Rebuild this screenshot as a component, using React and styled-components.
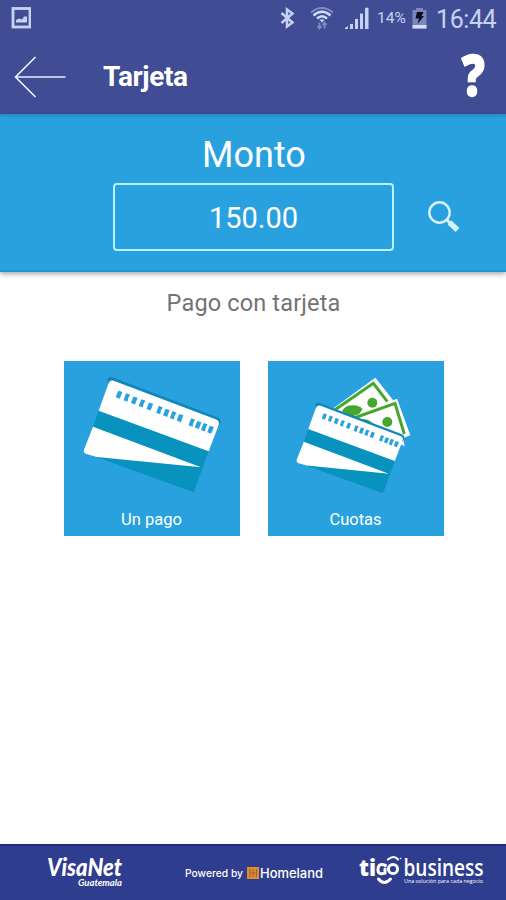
import React from 'react';
import styled, { createGlobalStyle } from 'styled-components';

const GlobalStyle = createGlobalStyle`
  * {
    box-sizing: border-box;
  }

  body {
    margin: 0;
    background: #fff;
    font-family: Roboto, sans-serif;
  }
`;

const Screen = styled.div`
  display: flex;
  flex-direction: column;
  width: 100%;
  height: 100vh;
  overflow: hidden;
  background: #fff;
`;

const Icon = styled.svg`
  display: block;
  flex-shrink: 0;
`;

const TopArea = styled.header`
  flex-shrink: 0;
  height: 114px;
  background: #404d94;
`;

const StatusBar = styled.div`
  display: flex;
  align-items: center;
  height: 36px;
  padding: 0 9px 0 11px;
  color: #c9d1f3;
`;

const StatusIcons = styled.div`
  display: flex;
  align-items: center;
  gap: 11px;
  margin-left: auto;
`;

const Connectivity = styled.div`
  display: flex;
  align-items: center;
  gap: 14px;
  padding-bottom: 1px;
`;

const BatteryStatus = styled.div`
  display: flex;
  align-items: center;
  gap: 5px;
  margin-left: -3px;
`;

const BatteryLevel = styled.span`
  width: 30px;
  font-size: 15.5px;
  line-height: 34px;
  white-space: nowrap;
`;

const Clock = styled.span`
  width: 61px;
  margin-left: -2px;
  padding-top: 3px;
  font-size: 25px;
  letter-spacing: -0.4px;
  line-height: 33px;
  white-space: nowrap;
`;

const TitleBar = styled.div`
  display: flex;
  align-items: center;
  height: 78px;
  padding: 4px 21px 0 14px;
  color: #fff;
`;

const Title = styled.h1`
  flex: 1;
  margin: 0 0 0 37px;
  font-size: 28px;
  font-weight: 700;
  line-height: 40px;
  letter-spacing: -0.4px;
`;

const Help = styled.span`
  padding-bottom: 6px;
  font-family: 'Open Sans', sans-serif;
  font-size: 57px;
  font-weight: 800;
  line-height: 68px;
  transform: scaleX(0.8);
  transform-origin: right;
  -webkit-text-stroke: 1.4px #fff;
`;

const AmountPanel = styled.section`
  flex-shrink: 0;
  height: 158px;
  padding-top: 20px;
  background: linear-gradient(#258bc7, #2aa1df 4px);
  border-bottom: 2px solid #1d97d4;
  box-shadow: 0 2px 5px rgba(0, 0, 0, 0.35);
  color: #fff;
`;

const AmountLabel = styled.h2`
  margin: 0 0 7px;
  padding-left: 2px;
  font-size: 36px;
  font-weight: 400;
  line-height: 42px;
  text-align: center;
`;

const AmountRow = styled.div`
  display: flex;
  align-items: center;
  padding-left: 113px;
`;

const AmountField = styled.div`
  width: 281px;
  height: 68px;
  margin-right: 33px;
  border: 2px solid #b9f2ff;
  border-radius: 4px;
  font-size: 29px;
  line-height: 66px;
  text-align: center;
`;

const Content = styled.main`
  flex: 1;
  padding-top: 17px;
`;

const Subtitle = styled.h3`
  margin: 0 0 43px;
  padding-left: 1px;
  color: #737373;
  font-size: 23.5px;
  font-weight: 400;
  line-height: 29px;
  text-align: center;
  letter-spacing: 0.15px;
`;

const Options = styled.div`
  display: flex;
  gap: 28px;
  padding-left: 64px;
`;

const OptionTile = styled.button`
  display: grid;
  width: 176px;
  height: 175px;
  padding: 0;
  border: 0;
  background: #2aa1df;
  color: #fff;
  font-family: inherit;

  > * {
    grid-area: 1 / 1;
  }
`;

const OptionLabel = styled.span`
  align-self: end;
  padding: 0 1px 6px 0;
  font-size: 16.5px;
  line-height: 20px;
`;

const Footer = styled.footer`
  display: flex;
  align-items: center;
  flex-shrink: 0;
  height: 56px;
  padding: 0 19px 0 46px;
  border-top: 2px solid #1d2a80;
  background: #2f3d8e;
`;

const FooterLogo = styled.svg`
  display: block;
  flex-shrink: 0;
  margin-left: ${({ $gap = 0 }) => $gap}px;
  fill: #fff;
`;

const PictureIcon = () => (
  <Icon width="20" height="22" viewBox="0 0 20 22" fill="none">
    <rect x="2" y="1.500" width="17" height="18.500" stroke="#c9d1f3" strokeWidth="2.800" />
    <path d="M5 15.500V13l3-1.500 3 1 2-3h3v6z" fill="#c9d1f3" />
  </Icon>
);

const BluetoothIcon = () => (
  <Icon width="16" height="22" viewBox="0 0 16 22" fill="none" stroke="#c9d1f3" strokeWidth="2.500">
    <path d="M1.500 6l11 9.500-5.500 4V2.500l5.500 4-11 9.500" />
  </Icon>
);

const WifiIcon = () => (
  <Icon width="24" height="24" viewBox="0 0 24 24" fill="none">
    <path d="M1 6.500Q12-2.500 23 6.500" stroke="#7f8bc6" strokeWidth="2" />
    <path d="M3.500 9.500Q12 2 20.500 9.500M7 12.500Q12 8 17 12.500" stroke="#d5dcfa" strokeWidth="2.400" />
    <path d="M9.500 13.500h5L12 16.500z" fill="#d5dcfa" />
    <path d="M9.500 22.500v-6M7.500 20l2 2.500 2-2.500M14.500 22.500v-6M12.500 19l2-2.500 2 2.500" stroke="#7f8bc6" strokeWidth="1.800" />
  </Icon>
);

const SignalIcon = () => (
  <Icon width="24" height="23" viewBox="0 0 24 23" fill="#c9d1f3">
    <path d="M0 22h3v-3l-3 2zM5 17h3v5H5zM10 12h3v10h-3zM15 6.500h3V22h-3zM20 .8h3.500V22H20z" />
  </Icon>
);

const BatteryIcon = () => (
  <Icon width="15" height="21" viewBox="0 0 15 21">
    <path d="M4 0h7v2h3.500v18.500H.5V2H4z" fill="#7c87b9" />
    <path d="M.5 17h14v3.500H.5z" fill="#d5dcfa" />
    <path d="M5 4h6.500L9.500 8H12l-6.500 8 1.500-5.500H3.500z" fill="#080c20" />
  </Icon>
);

const BackIcon = () => (
  <Icon width="52" height="42" viewBox="0 0 52 42" fill="none" stroke="#e9edff" strokeWidth="1.700">
    <path d="M51.500 21H1.500M21.500 1L1.500 21l20 20" />
  </Icon>
);

const SearchIcon = () => (
  <Icon width="34" height="34" viewBox="0 0 34 34" fill="none" stroke="#d7f1ff">
    <circle cx="12.500" cy="12.500" r="10.200" strokeWidth="2.400" />
    <path d="M20 20l3 3" strokeWidth="3" />
    <path d="M22.500 22.500l8 7.500" strokeWidth="5.500" />
  </Icon>
);

const DIGITS = [0, 25, 49, 74, 99, 130, 152, 174, 196, 234, 254, 274, 294];

// Tilted bank card, shared by both tiles
const BankCard = ({ transform }) => (
  <g transform={transform}>
    <path d="M130 54q5-9 15-5l314 119q14 6 10 18l-7 12-326-122z" fill="#0d88b9" />
    <path d="M104 149L434 271 389 394 99 289 87 197z" fill="#0793bd" />
    <path d="M104 149l29-80q5-14 18-9l304 115q13 5 9 17l-30 79z" fill="#fff" />
    <path d="M87 197L411 319 99 288 67 279q-10-4-7-13z" fill="#fff" />
    <g transform="translate(163 88) rotate(21)" fill="#2aa1df">
      {DIGITS.map((x, i) => (
        <path key={x} d={i % 2 ? `M${x} 0h13l-2 11 2 11h-13z` : `M${x} 1l13-1v22h-13z`} />
      ))}
    </g>
  </g>
);

const Bills = () => (
  <g fill="none">
    <path d="M188 148L322 50l60 76 28 130z" fill="#fff" />
    <path d="M199 148L316 67l42 55" stroke="#45a72b" strokeWidth="9" />
    <circle cx="313" cy="125" r="15" fill="#45a72b" />
    <path d="M222 151q8-17 29-18 20-2 33 11l-22 32z" fill="#45a72b" />
    <path d="M250 168l137-55 40 110-31 12z" fill="#fff" />
    <path d="M258 171l123-44 28 92" stroke="#45a72b" strokeWidth="9" />
    <circle cx="358" cy="183" r="15" fill="#45a72b" />
    <path d="M274 179q22-12 44 12z" fill="#45a72b" />
  </g>
);

const SinglePaymentArt = () => (
  <Icon width="176" height="175" viewBox="0 0 528 525">
    <BankCard />
  </Icon>
);

const InstallmentsArt = () => (
  <Icon width="176" height="175" viewBox="0 0 528 525">
    <Bills />
    <BankCard transform="translate(39 87) scale(.787)" />
  </Icon>
);

const VisaNetLogo = () => (
  <FooterLogo width="80" height="50" viewBox="0 -7 80 50" fontFamily="Lato, sans-serif" fontStyle="italic">
    <text x="1" y="21" fontSize="24" fontWeight="900" textLength="75" lengthAdjust="spacingAndGlyphs">VisaNet</text>
    <text x="32" y="31" fontSize="8.500" fontWeight="700" textLength="44" lengthAdjust="spacingAndGlyphs">Guatemala</text>
  </FooterLogo>
);

const HomelandLogo = () => (
  <FooterLogo $gap={58} width="141" height="20" viewBox="0 0 141 20">
    <text x="1" y="14" fontFamily="Inter, sans-serif" fontSize="10.500" fontWeight="500" textLength="58" lengthAdjust="spacingAndGlyphs">Powered by</text>
    <rect x="63" y="4" width="12" height="12" fill="#e08a32" />
    <path d="M66 6v8M72.500 6v8M69.200 6v8M66 10h6.500" stroke="#9d6535" />
    <text x="76" y="15" fontFamily="Inter, sans-serif" fontSize="13" fontWeight="500" textLength="63" lengthAdjust="spacingAndGlyphs">Homeland</text>
  </FooterLogo>
);

const TigoLogo = () => (
  <FooterLogo $gap={34} width="128" height="50" viewBox="0 -7 128 50">
    <g fontFamily="'Open Sans', sans-serif">
      <text x="0" y="20.500" fontSize="23" fontWeight="800" textLength="17" lengthAdjust="spacingAndGlyphs">ti</text>
      <text x="44.500" y="20.500" fontSize="22.500" fontWeight="600" textLength="80" lengthAdjust="spacingAndGlyphs">business</text>
      <text x="45" y="28" fontSize="6" textLength="79" lengthAdjust="spacingAndGlyphs">Una solución para cada negocio</text>
    </g>
    <g fill="none" stroke="#fff" strokeLinecap="round">
      <path d="M26.500 10.500q-7-3-7.500 3.500t7 4v-4" strokeWidth="3" />
      <circle cx="34" cy="14" r="4.600" strokeWidth="3" />
      <path d="M29 4.500q6-5 10 0" strokeWidth="2.200" />
      <path d="M19.500 24q5.500 7 12 0" strokeWidth="3" />
    </g>
    <circle cx="41.500" cy="3.500" r=".8" />
  </FooterLogo>
);

const App = () => (
  <Screen>
    <GlobalStyle />
    <TopArea>
      <StatusBar>
        <PictureIcon />
        <StatusIcons>
          <Connectivity>
            <BluetoothIcon />
            <WifiIcon />
          </Connectivity>
          <SignalIcon />
          <BatteryStatus>
            <BatteryLevel>14%</BatteryLevel>
            <BatteryIcon />
          </BatteryStatus>
          <Clock>16:44</Clock>
        </StatusIcons>
      </StatusBar>
      <TitleBar>
        <BackIcon />
        <Title>Tarjeta</Title>
        <Help>?</Help>
      </TitleBar>
    </TopArea>
    <AmountPanel>
      <AmountLabel>Monto</AmountLabel>
      <AmountRow>
        <AmountField>150.00</AmountField>
        <SearchIcon />
      </AmountRow>
    </AmountPanel>
    <Content>
      <Subtitle>Pago con tarjeta</Subtitle>
      <Options>
        <OptionTile>
          <SinglePaymentArt />
          <OptionLabel>Un pago</OptionLabel>
        </OptionTile>
        <OptionTile>
          <InstallmentsArt />
          <OptionLabel>Cuotas</OptionLabel>
        </OptionTile>
      </Options>
    </Content>
    <Footer>
      <VisaNetLogo />
      <HomelandLogo />
      <TigoLogo />
    </Footer>
  </Screen>
);

export default App;
